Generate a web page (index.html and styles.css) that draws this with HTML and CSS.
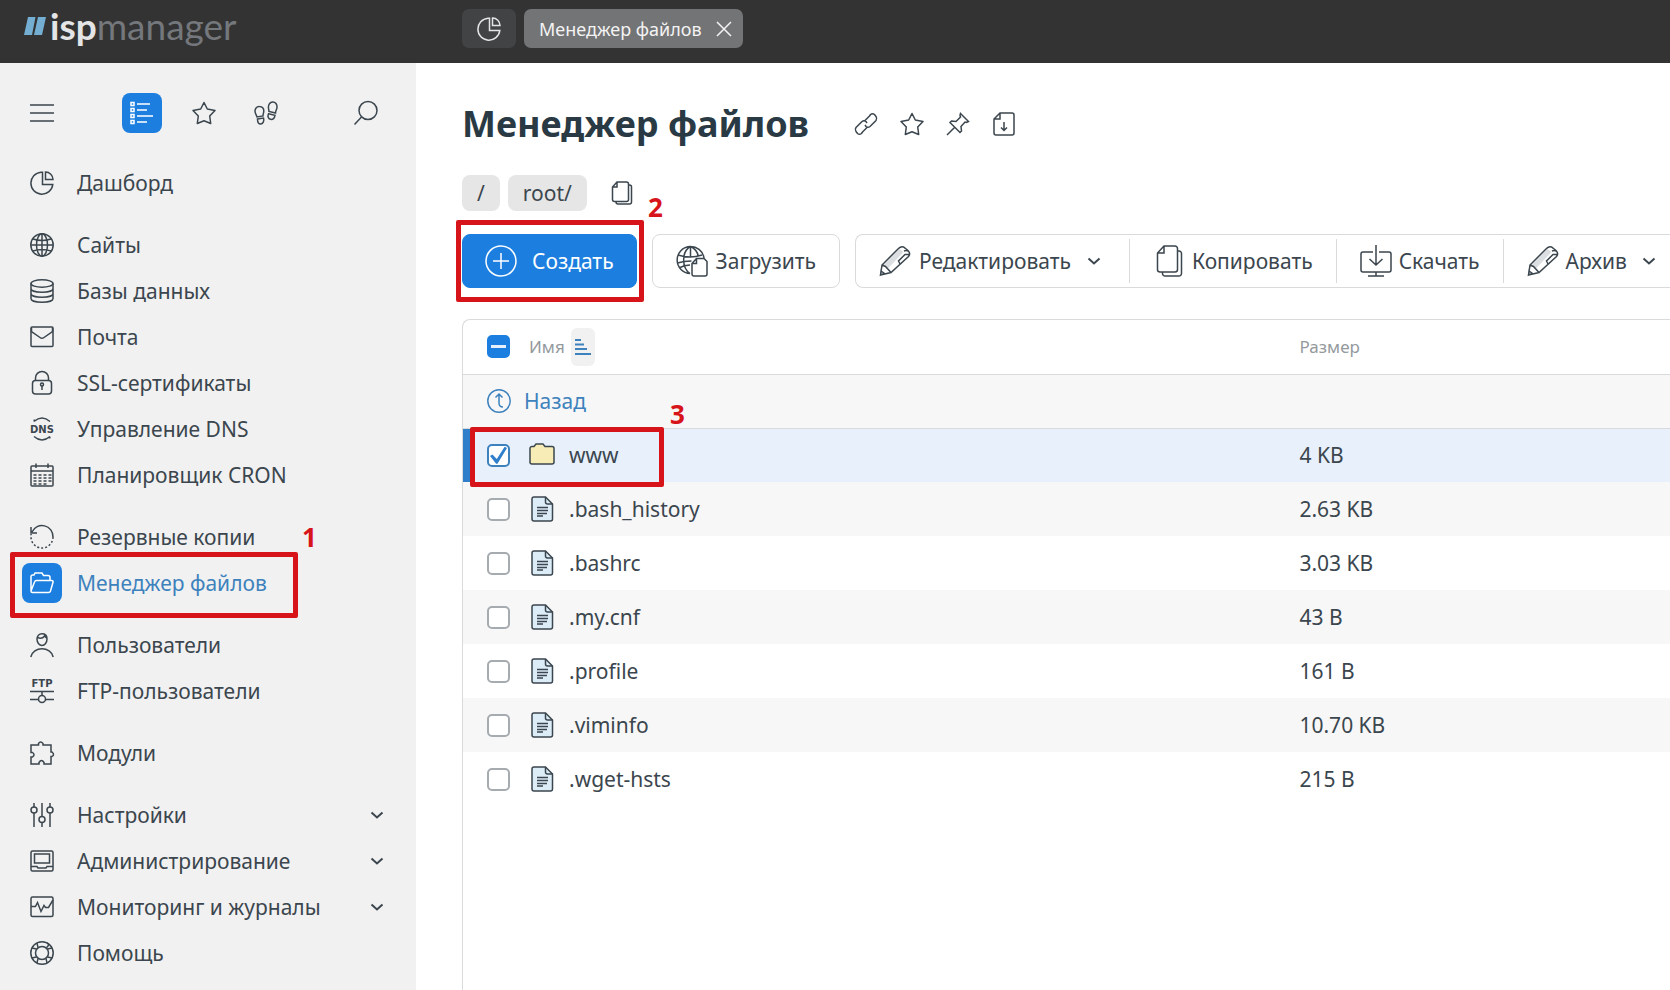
FILE: index.html
```html
<!DOCTYPE html>
<html lang="ru">
<head>
<meta charset="utf-8">
<title>Менеджер файлов — ispmanager</title>
<link rel="stylesheet" href="styles.css">
</head>
<body>
<svg class="sprite" aria-hidden="true">
  <symbol id="pie" viewBox="0 0 24 24"><path d="M11 1.2A11 11 0 1 0 22.800 13.500H12.500V1.200ZM15.500 1v7.500H23A7.500 7.500 0 0 0 15.500 1Z"/></symbol>
  <symbol id="star" viewBox="0 0 24 24"><path stroke-linejoin="round" d="m12 1.500 3.300 6.500 7.700 1.500-5.300 5.500 1 7.500L12 19.800l-6.700 2.700 1-7.500L1 9.500 8.700 8Z"/></symbol>
  <symbol id="copy" viewBox="0 0 24 24"><path d="M7 1h9.500a2 2 0 0 1 2 2v15.500a2 2 0 0 1-2 2H4.500a2 2 0 0 1-2-2V6Zm0 0v5H2.500M18.500 4h1a2 2 0 0 1 2 2v15a2 2 0 0 1-2 2H8a2 2 0 0 1-2-2v-.5"/></symbol>
  <symbol id="chevron" viewBox="0 0 14 14"><path d="m1.500 4.500 5.500 5 5.500-5"/></symbol>
  <symbol id="pencil" viewBox="0 0 32 32"><path class="shade" d="M4 20.500 20.500 4l4 3L9 23.500Z"/><path d="m1.500 30 1.500-10L19.500 3.500q2.500-2.500 5-1.500l4.500 3.500q3 3 .5 6L12 27.500ZM3 20l3.500 1.500L12 27.500M25 6q2-1 4 0M21 19l-1.500-3 6.500-6.500h4M1.500 30l4-1.500L2 26Z"/></symbol>
  <symbol id="file" viewBox="0 0 24 26"><path class="paper" d="M4 1h11.500L22.500 8v15a2 2 0 0 1-2 2H4a2 2 0 0 1-2-2V3a2 2 0 0 1 2-2Z"/><path d="M15.500 1v5a2 2 0 0 0 2 2h5"/><path d="M7 11.500h11M7 14.500h11M7 17.500h10M7 20h6"/></symbol>
</svg>

<header class="topbar">
  <a class="logo" href="#" aria-label="ispmanager">
    <svg class="logo-mark" viewBox="0 0 22 18" aria-hidden="true"><path d="M4 0H11.500L8 18H0ZM14 0H22l-4 18H10Z"/></svg>
    <span class="logo-isp">isp</span><span class="logo-manager">manager</span>
  </a>
  <div class="tabs">
    <button class="tab-home" type="button" aria-label="Дашборд"><svg class="icon"><use href="#pie"/></svg></button>
    <div class="tab">
      <a href="#">Менеджер файлов</a>
      <button type="button" aria-label="Закрыть"><svg class="icon-close" viewBox="0 0 16 16"><path d="m1 1 14 14M15 1 1 15"/></svg></button>
    </div>
  </div>
</header>

<div class="layout">
  <aside class="sidebar">
    <div class="side-tools">
      <button class="box" type="button" aria-label="Меню"><svg class="icon" viewBox="0 0 24 24"><path d="M0 4h24M0 12h24M0 20h24"/></svg></button>
      <div class="side-modes">
        <button class="box active" type="button" aria-label="Список"><svg class="icon" viewBox="0 0 24 24"><path d="M1 1.500h3v3H1ZM1 7.500h3v3H1ZM1 13.500h3v3H1ZM1 19.500h3v3H1ZM7 3h13M7 9h10M7 15h16M7 21h10"/></svg></button>
        <button class="box" type="button" aria-label="Избранное"><svg class="icon"><use href="#star"/></svg></button>
        <button class="box" type="button" aria-label="История"><svg class="icon" viewBox="0 0 24 24"><path d="M5.500 5.500C2.500 5.200.8 8 1 10.500c.2 2 1.500 3.500 2 5.500l6-1c-.2-1.500.8-3 .8-5C9.800 7.500 8.500 5.700 5.500 5.500ZM3.500 18l6-1c1 3-.5 6-3 6s-3-2.500-3-5ZM18.500 1c3-.2 4.800 2.500 4.500 5.500-.2 2-1.500 3.500-1.500 5.500l-6.500-1.500c0-1.500-.7-3-.6-4.500.2-2.500 1.500-4.700 4.100-5ZM14.500 12.800l6.500 1.500c-.5 3-2 4.500-4.500 4s-3-3-2-5.500Z"/></svg></button>
      </div>
      <button class="box" type="button" aria-label="Поиск"><svg class="icon" viewBox="0 0 24 24"><circle cx="14" cy="9.500" r="9"/><path d="m7.500 16-7 7.500"/></svg></button>
    </div>
    <nav class="menu">
      <ul>
        <li><a href="#"><span class="box"><svg class="icon"><use href="#pie"/></svg></span>Дашборд</a></li>
      </ul>
      <ul>
        <li><a href="#"><span class="box"><svg class="icon" viewBox="0 0 24 24"><circle cx="12" cy="12" r="11.200"/><ellipse cx="12" cy="12" rx="5.500" ry="11.200"/><path d="M12 1v22M1 12h22M3 6q9 3 18 0M3 18q9-3 18 0"/></svg></span>Сайты</a></li>
        <li><a href="#"><span class="box"><svg class="icon" viewBox="0 0 24 24"><ellipse cx="12" cy="4.500" rx="11" ry="3.700"/><path d="M1 4.500v15c0 5 22 5 22 0v-15M1 9.500c0 5 22 5 22 0M1 14.500c0 5 22 5 22 0"/></svg></span>Базы данных</a></li>
        <li><a href="#"><span class="box"><svg class="icon" viewBox="0 0 24 24"><rect x="1" y="2" width="22" height="19.500" rx="1"/><path d="M1.500 3v3.500l8.500 6q2 1.500 4 0l8.500-6V3"/></svg></span>Почта</a></li>
        <li><a href="#"><span class="box"><svg class="icon" viewBox="0 0 24 24"><rect x="2.500" y="9.500" width="19" height="13.500" rx="3"/><path d="M5.500 9.500V7a6.500 6.500 0 0 1 13 0v2.500M12 15v4"/><circle cx="12" cy="13.500" r="1.500"/></svg></span>SSL-сертификаты</a></li>
        <li><a href="#"><span class="box"><svg class="icon" viewBox="0 0 24 24"><path d="M4 4.500q8-7 16 0M4 19.500q8 7 16 0M4 4.500l.5-2M20 19.500l-.5 2"/><text x="12" y="16">DNS</text></svg></span>Управление DNS</a></li>
        <li><a href="#"><span class="box"><svg class="icon" viewBox="0 0 24 24"><rect x="1" y="3" width="22" height="20" rx="1"/><path d="M1 8h22M6 .5V5M18 .5V5"/><path stroke-dasharray="3 2" d="M3.500 12h18M3.500 15h18M3.500 18h18M3.500 21h15"/></svg></span>Планировщик CRON</a></li>
      </ul>
      <ul>
        <li><a href="#"><span class="box"><svg class="icon" viewBox="0 0 24 24"><path d="M1 2v6h6M2 7A11 11 0 0 1 23 12"/><path stroke-dasharray="2 2" d="M23 12A11 11 0 0 1 1 12V9"/></svg></span>Резервные копии</a></li>
        <li class="current"><a href="#" aria-current="page"><span class="box active"><svg class="icon" viewBox="0 0 24 24"><path d="M1 20V5.500a1.500 1.500 0 0 1 1.500-1.500H4l1-2h7l1.500 2.500H18a2 2 0 0 1 2 2v3M1 20l3.500-9q.5-1.500 2-1.500h15q2 0 1.500 1.700l-2.500 8.800q-.5 1.500-2 1.500h-16Q1 21.500 1 20Z"/></svg></span>Менеджер файлов</a>
          <span class="mark mark-menu"></span><span class="mark-no no-menu">1</span></li>
      </ul>
      <ul>
        <li><a href="#"><span class="box"><svg class="icon" viewBox="0 0 24 24"><path d="M12 .8c3 0 5 2 5 5.200 0 4-2.500 6.500-5 6.500S7 10 7 6C7 2.800 9 .8 12 .8ZM7.500 4.500q4.500 2 7-1.500l2 2M.8 24c2.200-11 20.200-11 22.400 0"/></svg></span>Пользователи</a></li>
        <li><a href="#"><span class="box"><svg class="icon" viewBox="0 0 24 24"><text x="12" y="8">FTP</text><path d="M0 12.500h24M12 12.500v4M0 20.500h8.500M15.500 20.500H24"/><circle cx="12" cy="20" r="3.500"/></svg></span>FTP-пользователи</a></li>
      </ul>
      <ul>
        <li><a href="#"><span class="box"><svg class="icon" viewBox="0 0 24 24"><path d="M1 4h7.500V2.500q2-3 4.500 0V4h8v7h1q3 2.500 0 4.500h-1V23h-7v-1.500q-2.500-4-5 0V23H1v-7h1.500q3-2.500 0-4.500H1Z"/></svg></span>Модули</a></li>
      </ul>
      <ul>
        <li><a href="#"><span class="box"><svg class="icon" viewBox="0 0 24 24"><circle cx="4" cy="7" r="3"/><circle cx="12" cy="16.500" r="3"/><circle cx="20" cy="7" r="3"/><path d="M4 0v4M4 10v14M12 0v13.500M12 19.500V24M20 0v4M20 10v14"/></svg></span>Настройки<svg class="chevron"><use href="#chevron"/></svg></a></li>
        <li><a href="#"><span class="box"><svg class="icon" viewBox="0 0 24 24"><path d="M2.500 2h19A1.500 1.500 0 0 1 23 3.500v17a1.500 1.500 0 0 1-1.500 1.500h-19A1.500 1.500 0 0 1 1 20.500v-17A1.500 1.500 0 0 1 2.500 2ZM4.500 5h15v9h-15ZM1 17.500h6l1 1.500h8l1-1.500h6"/></svg></span>Администрирование<svg class="chevron"><use href="#chevron"/></svg></a></li>
        <li><a href="#"><span class="box"><svg class="icon" viewBox="0 0 24 24"><rect x="1" y="2" width="22" height="19.500" rx="1.500"/><path d="M1 11.500h4.500l2-4 3.500 9 3-6 1.500 2h3L23 5"/></svg></span>Мониторинг и журналы<svg class="chevron"><use href="#chevron"/></svg></a></li>
        <li><a href="#"><span class="box"><svg class="icon" viewBox="0 0 24 24"><circle cx="12" cy="12" r="11.200"/><circle cx="12" cy="12" r="6.500"/><path d="M7 1.800l1 4.800M17 1.800l2 2-2.500 3M22.200 7l-4.800 1M1.800 17l4.800-1M1.800 7l4.800 1M22.200 17l-4.800-1M7 22.200l1-4.800M17 22.200l-1-4.800"/></svg></span>Помощь</a></li>
      </ul>
    </nav>
  </aside>

  <main class="content">
    <div class="heading">
      <h1>Менеджер файлов</h1>
      <div class="heading-tools">
        <button type="button" aria-label="Ссылка"><svg class="icon" viewBox="0 0 24 24"><path d="M15.500 4l1-1.500q2-1.500 4 0l1.500 2q1.500 2 0 4L16 14.500q-2 1.500-4 0l-1-1.500M8.500 20l-1 1.500q-2 1.500-4 0l-1.500-2q-1.500-2 0-4L8 9.500q2-1.500 4 0l1 1.500M15.500 4l-5 5M8.500 20l5-5"/></svg></button>
        <button type="button" aria-label="В избранное"><svg class="icon"><use href="#star"/></svg></button>
        <button type="button" aria-label="Закрепить"><svg class="icon" viewBox="0 0 24 24"><path d="m14.500 1.500 8 8-2 1-1.500-.5-4 4.500.5 4.500-1.500 1.500L4 10.500 5.500 9l4.500.5L14.500 5 14 3.500ZM8.500 15.500 1 23"/></svg></button>
        <button type="button" aria-label="Сохранить"><svg class="icon" viewBox="0 0 24 24"><path d="M8 1h12a2 2 0 0 1 2 2v18a2 2 0 0 1-2 2H4a2 2 0 0 1-2-2V7Zm0 0v6H2M12 10v8.500M9 15.500l3 3 3-3"/></svg></button>
      </div>
    </div>
    <div class="path">
      <a class="crumb" href="#">/</a>
      <a class="crumb" href="#">root/</a>
      <button type="button" aria-label="Копировать путь"><svg class="icon"><use href="#copy"/></svg></button>
    </div>
    <div class="actions">
      <div class="create-wrap">
        <button class="btn primary" type="button"><svg class="icon-lg" viewBox="0 0 32 32"><circle cx="16" cy="16" r="15"/><path d="M16 8v16M8 16h16"/></svg>Создать</button>
        <span class="mark mark-create"></span><span class="mark-no no-create">2</span>
      </div>
      <button class="btn" type="button"><svg class="icon-lg" viewBox="0 0 32 32"><path d="M14 28.500A13.500 13.500 0 1 1 28 13M14 28.500C5 22 6 6 14.500 1.500 20 4 22 9 22.500 12M14.500 1.500V12M2 10q12 4 24 0M1.500 18q6-2 14-2M3 23q5-3 11-3"/><path d="M20.500 13.500H28l3 3V29a2 2 0 0 1-2 2H18a2 2 0 0 1-2-2V18.500Zm0 0v5H16"/></svg>Загрузить</button>
      <div class="btn-group">
        <button class="seg seg-edit" type="button"><svg class="icon-lg"><use href="#pencil"/></svg>Редактировать<svg class="chevron"><use href="#chevron"/></svg></button>
        <button class="seg" type="button"><svg class="icon-lg" viewBox="0 0 32 32"><path d="M11 1h11a2.500 2.500 0 0 1 2.500 2.500v21A2.500 2.500 0 0 1 22 27H7a2.500 2.500 0 0 1-2.500-2.500V8Zm0 0v7H4.500M24.500 6H26a2.500 2.500 0 0 1 2.500 2.500v20A2.500 2.500 0 0 1 26 31H12a2.500 2.500 0 0 1-2.500-2.500V27"/></svg>Копировать</button>
        <button class="seg" type="button"><svg class="icon-lg" viewBox="0 0 32 32"><path d="M13 7H3a2 2 0 0 0-2 2v16a2 2 0 0 0 2 2h26a2 2 0 0 0 2-2V9a2 2 0 0 0-2-2H19M16 0v20M9.500 14l6.500 6 6.500-6M16 27v4M8 31h16"/></svg>Скачать</button>
        <button class="seg seg-archive" type="button"><svg class="icon-lg"><use href="#pencil"/></svg>Архив<svg class="chevron"><use href="#chevron"/></svg></button>
      </div>
    </div>
    <div class="files">
      <table>
        <colgroup><col class="col-check"><col class="col-name"><col></colgroup>
        <thead>
          <tr>
            <th><input type="checkbox" class="mixed" aria-label="Выбрать все"></th>
            <th><div class="sort-head">Имя<button class="sort" type="button" aria-label="Сортировать"><svg viewBox="0 0 16 18"><path d="M0 2h6M0 6.500h9M0 11h12M0 16h16"/></svg></button></div></th>
            <th>Размер</th>
          </tr>
        </thead>
        <tbody>
          <tr class="back"><td colspan="3"><a href="#"><svg class="icon" viewBox="0 0 24 24"><circle cx="12" cy="12" r="11.200"/><path d="M8.500 8.500 12 5l3.500 3.500M12 5v9q0 4 4 4"/></svg>Назад</a></td></tr>
          <tr class="selected">
            <td><input type="checkbox" id="f1" checked><span class="mark mark-row"></span><span class="mark-no no-row">3</span></td>
            <td><label for="f1"><svg class="icon-file" viewBox="0 0 26 26"><path class="folder" d="M1 6.500a2 2 0 0 1 2-2h2L7 2h7l2 2.500h7a2 2 0 0 1 2 2V20a2 2 0 0 1-2 2H3a2 2 0 0 1-2-2Z"/></svg>www</label></td>
            <td>4 KB</td>
          </tr>
          <tr><td><input type="checkbox" id="f2"></td><td><label for="f2"><svg class="icon-file"><use href="#file"/></svg>.bash_history</label></td><td>2.63 KB</td></tr>
          <tr><td><input type="checkbox" id="f3"></td><td><label for="f3"><svg class="icon-file"><use href="#file"/></svg>.bashrc</label></td><td>3.03 KB</td></tr>
          <tr><td><input type="checkbox" id="f4"></td><td><label for="f4"><svg class="icon-file"><use href="#file"/></svg>.my.cnf</label></td><td>43 B</td></tr>
          <tr><td><input type="checkbox" id="f5"></td><td><label for="f5"><svg class="icon-file"><use href="#file"/></svg>.profile</label></td><td>161 B</td></tr>
          <tr><td><input type="checkbox" id="f6"></td><td><label for="f6"><svg class="icon-file"><use href="#file"/></svg>.viminfo</label></td><td>10.70 KB</td></tr>
          <tr><td><input type="checkbox" id="f7"></td><td><label for="f7"><svg class="icon-file"><use href="#file"/></svg>.wget-hsts</label></td><td>215 B</td></tr>
        </tbody>
      </table>
    </div>
  </main>
</div>
</body>
</html>
```
FILE: styles.css
```css
:root {
  --blue: #1c7fe0;
  --link: #3d82bd;
  --ink: #3b464e;
  --line: #d9dadb;
  --red: #d8141b;
}

* { box-sizing: border-box; }

body {
  margin: 0;
  min-height: 100vh;
  display: flex;
  flex-direction: column;
  overflow: hidden;
  background: #fff;
  color: var(--ink);
  font: 21px/28px "Noto Sans", "Open Sans", sans-serif;
}

button {
  padding: 0;
  border: 0;
  background: none;
  color: inherit;
  font: inherit;
  cursor: pointer;
}

a { color: inherit; text-decoration: none; }
ul { margin: 0; padding: 0; list-style: none; }

svg {
  display: block;
  flex: none;
  fill: none;
  stroke: currentColor;
  stroke-width: 1.5;
}

.sprite { position: absolute; width: 0; height: 0; }
.icon { width: 24px; height: 24px; overflow: visible; }
.icon-lg { width: 32px; height: 32px; }
.icon-file { width: 26px; height: 26px; }
.icon-close { width: 16px; height: 16px; }
.chevron { width: 14px; height: 14px; stroke-width: 2; }

.icon text {
  fill: currentColor;
  stroke: none;
  font: bold 10px "DejaVu Sans", sans-serif;
  text-anchor: middle;
}

/* Top bar */
.topbar {
  display: flex;
  height: 63px;
  background: #333;
  color: #e4e5e6;
}

.logo {
  display: flex;
  align-items: center;
  width: 462px;
  height: 52px;
  padding-left: 24px;
  font: 37px/40px Lato, sans-serif;
}

.logo-mark { width: 22px; height: 18px; margin-right: 4px; fill: #74afd3; stroke: none; }
.logo-isp { font-weight: 700; }
.logo-manager { color: #74777b; }

.tabs { display: flex; gap: 8px; padding-top: 9px; }

.tab-home, .tab { height: 39px; border-radius: 7px; }

.tab-home {
  display: grid;
  place-items: center;
  width: 54px;
  background: #424345;
}

.tab {
  display: flex;
  align-items: center;
  gap: 14px;
  padding: 0 11px 0 15px;
  background: #737476;
  color: #f3f3f3;
  font-size: 18px;
}

/* Sidebar */
.layout { display: flex; flex: 1; }

.sidebar { width: 416px; flex: none; background: #f1f1f1; }

.side-tools {
  display: flex;
  align-items: center;
  padding: 30px 30px 27px 22px;
}

.side-modes { display: flex; gap: 22px; margin: 0 auto 0 60px; }

.box {
  display: grid;
  place-items: center;
  width: 40px;
  height: 40px;
  border-radius: 8px;
}

.box.active { background: var(--blue); color: #fff; }

.menu { display: grid; gap: 16px; }
.menu li { position: relative; }

.menu a {
  display: flex;
  align-items: center;
  gap: 15px;
  height: 46px;
  padding: 0 32px 0 22px;
}

.menu .chevron { margin-left: auto; }
.current a { color: var(--link); }

/* Content */
.content {
  display: flex;
  flex: 1;
  flex-direction: column;
  min-width: 0;
  padding: 36px 0 0 46px;
}

.heading { display: flex; align-items: center; gap: 45px; height: 50px; }
h1 { margin: 0; color: #2a3a44; font-size: 36px; line-height: 50px; font-weight: 700; }
.heading-tools { display: flex; gap: 22px; }

.path { display: flex; align-items: center; gap: 8px; margin-top: 26px; }
.path button { margin-left: 15px; }

.crumb {
  padding: 4px 15px;
  border-radius: 8px;
  background: #e6e6e6;
}

.actions { display: flex; gap: 15px; margin-top: 23px; white-space: nowrap; }
.create-wrap { position: relative; }

.btn, .seg { display: flex; align-items: center; height: 54px; }

.btn {
  gap: 8px;
  padding: 0 23px;
  border: 1px solid var(--line);
  border-radius: 8px;
}

.btn.primary {
  gap: 15px;
  padding: 0 22px;
  border-color: var(--blue);
  background: var(--blue);
  color: #fff;
}

.btn-group {
  display: flex;
  align-items: center;
  flex: 1 0 auto;
  border: 1px solid var(--line);
  border-right: 0;
  border-radius: 8px 0 0 8px;
}

.seg {
  height: 44px;
  gap: 7px;
  padding: 0 23px;
  border-left: 1px solid var(--line);
}
.seg:first-child { border-left: 0; }
.seg .chevron { margin-left: 8px; }
.seg-edit { gap: 8px; padding-right: 28px; }
.shade { fill: #dcdfe1; stroke: none; }

/* File table */
.files {
  flex: 1;
  margin-top: 31px;
  border: 1px solid var(--line);
  border-width: 1px 0 0 1px;
  border-radius: 8px 0 0 0;
}

table { width: 100%; border-collapse: collapse; table-layout: fixed; }
.col-check { width: 64px; }
.col-name { width: 64%; }
th, td { height: 54px; padding: 0; text-align: left; }
td:first-child, th:first-child { padding-left: 24px; }

thead tr { border-bottom: 1px solid var(--line); }
th { color: #94999d; font-size: 17px; font-weight: 400; }
.sort-head { display: flex; align-items: center; gap: 6px; padding-left: 2px; }

.sort {
  display: grid;
  place-items: center;
  width: 24px;
  height: 38px;
  border-radius: 6px;
  background: #f1f1f1;
  color: var(--link);
}
.sort svg { width: 16px; height: 18px; stroke-width: 2; }

tbody tr:nth-child(odd) { background: #f7f7f7; }
tbody .back { border-bottom: 1px solid var(--line); }
.back a { display: flex; align-items: center; gap: 13px; color: var(--link); }

tbody .selected { background: #e7f0fb; }
.selected td:first-child { position: relative; box-shadow: inset 7px 0 #2f7fcb; }

td label { display: flex; align-items: center; gap: 14px; padding-left: 2px; }
.paper { fill: #dcedf8; }
.folder { fill: #f8ecb6; }

input[type="checkbox"] {
  appearance: none;
  display: block;
  position: relative;
  width: 23px;
  height: 23px;
  margin: 0;
  border: 2px solid #a6abaf;
  border-radius: 5px;
  background: #fff;
}
input[type="checkbox"]:checked { border-color: var(--link); }
input[type="checkbox"]:checked::after {
  content: "";
  position: absolute;
  inset: 1px;
  background: #2f7fcb;
  clip-path: polygon(0 55%, 14% 45%, 40% 72%, 86% 0, 100% 8%, 44% 100%, 36% 100%);
}
input.mixed { border-color: var(--blue); background: var(--blue); }
input.mixed::after {
  content: "";
  position: absolute;
  left: 2px;
  top: 8px;
  width: 15px;
  height: 3px;
  background: #e6f0fb;
}

/* Step annotations */
.mark {
  position: absolute;
  border: 5px solid var(--red);
  border-radius: 2px;
  pointer-events: none;
}
.mark-no {
  position: absolute;
  color: var(--red);
  font: bold 26px/26px "Open Sans", "Noto Sans", sans-serif;
}
.mark-menu { left: 10px; top: -8px; width: 288px; height: 66px; }
.no-menu { left: 302px; top: -36px; }
.mark-create { left: -6px; top: -14px; width: 188px; height: 82px; }
.no-create { left: 186px; top: -40px; }
.mark-row { left: 7px; top: -2px; width: 194px; height: 60px; z-index: 1; }
.no-row { left: 207px; top: -28px; }
```
